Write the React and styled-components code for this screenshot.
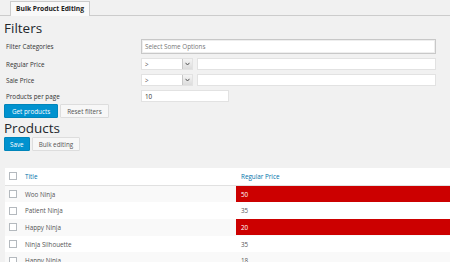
import React from 'react'
import styled, { createGlobalStyle } from 'styled-components'

const GlobalStyle = createGlobalStyle`
  html, body {
    margin: 0;
    padding: 0;
    background: #f1f1f1;
    overflow: hidden;
  }
  body {
    font-family: "Open Sans", "Liberation Sans", sans-serif;
    color: #444;
  }
`

const Page = styled.div`
  width: 450px;
  height: 262px;
  overflow: hidden;
`

const TabBar = styled.div`
  display: flex;
  padding: 1px 0 0 10px;
  border-bottom: 1px solid #ccc;
  height: 14px;
`

const Tab = styled.div`
  background: #f9f9f9;
  border: 1px solid #ccc;
  border-bottom: none;
  padding: 0 5px;
  font-size: 6.7px;
  font-weight: 700;
  color: #222;
  line-height: 14px;
  margin-bottom: -1px;
  height: 15px;
  box-sizing: border-box;
`

const Content = styled.div`
  padding: 0 0 0 4px;
`

const Heading = styled.h2`
  margin: ${p => p.top ?? 3}px 0 0 0;
  font-size: 13.5px;
  font-weight: 400;
  color: #23282d;
  line-height: 18px;
`

const Form = styled.div`
  display: grid;
  grid-template-columns: 135px 1fr;
  row-gap: 4px;
  padding: 2px 14px 0 2px;
  align-items: center;
`

const Label = styled.div`
  font-size: 6.3px;
  color: #333;
`

const Field = styled.div`
  display: flex;
  gap: 4px;
  width: ${p => p.width || 'auto'};
`

const TextBox = styled.div`
  flex: 1;
  height: ${p => p.tall ? '15px' : '12px'};
  box-sizing: border-box;
  background: #fff;
  border: 1px solid ${p => p.tall ? '#c8c8c8' : '#e2e2e2'};
  box-shadow: ${p => p.tall ? 'inset 0 0 0 1px #eee' : 'none'};
  font-size: 6.3px;
  color: ${p => p.muted ? '#777' : '#333'};
  display: flex;
  align-items: center;
  padding-left: 3px;
`

const Select = styled.div`
  width: 52px;
  height: 12px;
  box-sizing: border-box;
  background: #fff;
  border: 1px solid #e2e2e2;
  display: flex;
  align-items: center;
  justify-content: space-between;
  font-size: 6.3px;
  color: #555;
  padding-left: 3px;
`

const Arrow = styled.div`
  width: 9px;
  height: 10px;
  background: linear-gradient(#f4f4f4, #dcdcdc);
  border-left: 1px solid #c8c8c8;
  display: flex;
  align-items: center;
  justify-content: center;
`

const ButtonRow = styled.div`
  display: flex;
  gap: 2px;
  margin-top: ${p => p.top || 0}px;
`

const Button = styled.div`
  height: 14px;
  box-sizing: border-box;
  padding: 0 ${p => p.pad || 6}px;
  font-size: 6.3px;
  line-height: 13px;
  border: 1px solid ${p => p.primary ? '#0085ba' : '#ddd'};
  background: ${p => p.primary ? '#0092cf' : '#f7f7f7'};
  color: ${p => p.primary ? '#fff' : '#555'};
  border-radius: 1px;
`

const Table = styled.div`
  margin-top: 17px;
  margin-left: 1px;
  width: 460px;
  background: #fff;
`

const Row = styled.div`
  display: grid;
  grid-template-columns: 20px 211px 1fr;
  height: 16.7px;
  align-items: center;
  background: ${p => p.alt ? '#f9f9f9' : '#fff'};
  border-bottom: ${p => p.head ? '1px solid #e1e1e1' : 'none'};
  font-size: 6.3px;
`

const Check = styled.div`
  width: 6px;
  height: 6px;
  border: 1px solid #b4b9be;
  background: #fff;
  margin-left: 4px;
`

const HeadCell = styled.div`
  color: #0073aa;
  padding-left: ${p => p.indent || 0}px;
`

const Cell = styled.div`
  color: #555;
`

const PriceCell = styled.div`
  height: ${p => p.hot ? '16px' : 'auto'};
  display: flex;
  align-items: center;
  padding-left: 5px;
  color: ${p => p.hot ? '#fff' : '#555'};
  background: ${p => p.hot ? '#cc0000' : 'transparent'};
`

const products = [
  { name: 'Woo Ninja', price: 50, hot: true },
  { name: 'Patient Ninja', price: 35 },
  { name: 'Happy Ninja', price: 20, hot: true },
  { name: 'Ninja Silhouette', price: 35 },
  { name: 'Happy Ninja', price: 18 },
]

const SelectArrow = () => (
  <Arrow>
    <svg width="5" height="4" viewBox="0 0 5 4">
      <path d="M0.5 0.8 L2.5 3 L4.5 0.8" stroke="#555" strokeWidth="1" fill="none" />
    </svg>
  </Arrow>
)

const App = () => {
  return (
    <Page>
      <GlobalStyle />
      <TabBar>
        <Tab>Bulk Product Editing</Tab>
      </TabBar>
      <Content>
        <Heading>Filters</Heading>
        <Form>
          <Label>Filter Categories</Label>
          <Field><TextBox tall muted>Select Some Options</TextBox></Field>
          <Label>Regular Price</Label>
          <Field>
            <Select>&gt;<SelectArrow /></Select>
            <TextBox />
          </Field>
          <Label>Sale Price</Label>
          <Field>
            <Select>&gt;<SelectArrow /></Select>
            <TextBox />
          </Field>
          <Label>Products per page</Label>
          <Field width="88px"><TextBox>10</TextBox></Field>
        </Form>
        <ButtonRow top={2}>
          <Button primary pad={7}>Get products</Button>
          <Button pad={6}>Reset filters</Button>
        </ButtonRow>
        <Heading top={1}>Products</Heading>
        <ButtonRow>
          <Button primary pad={5}>Save</Button>
          <Button pad={6}>Bulk editing</Button>
        </ButtonRow>
        <Table>
          <Row head>
            <Check />
            <HeadCell>Title</HeadCell>
            <HeadCell indent={5}>Regular Price</HeadCell>
          </Row>
          {products.map((p, i) => (
            <Row key={i} alt={i % 2 === 0}>
              <Check />
              <Cell>{p.name}</Cell>
              <PriceCell hot={p.hot}>{p.price}</PriceCell>
            </Row>
          ))}
        </Table>
      </Content>
    </Page>
  )
}

export default App
